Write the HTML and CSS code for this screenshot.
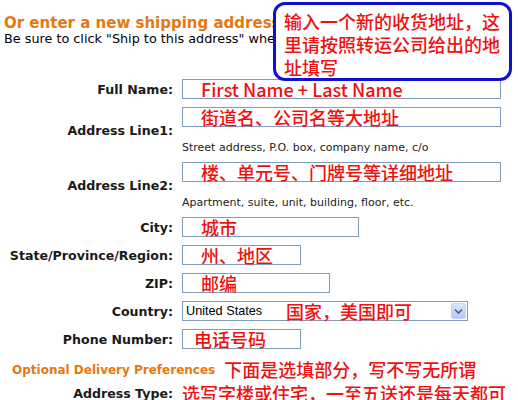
FILE: index.html
```html
<!DOCTYPE html>
<html lang="zh-CN">
<head>
    <meta charset="UTF-8">
    <title>Shipping Address</title>
    <link rel="stylesheet" href="styles.css">
</head>
<body>

<div class="page">

    <!-- Heading -->
    <h1 class="title">Or enter a new shipping address</h1>
    <p class="note">Be sure to click "Ship to this address" when you're done.</p>

    <!-- Annotation bubble -->
    <div class="callout">输入一个新的收货地址，这里请按照转运公司给出的地址填写</div>

    <!-- Address form -->
    <div class="form">
        <div class="label">Full Name:</div>
        <div class="field">
            <div class="input w-full"><span class="tip">First Name + Last Name</span></div>
        </div>

        <div class="label">Address Line1:</div>
        <div class="field">
            <div class="input w-full"><span class="tip">街道名、公司名等大地址</span></div>
            <div class="hint">Street address, P.O. box, company name, c/o</div>
        </div>

        <div class="label">Address Line2:</div>
        <div class="field">
            <div class="input w-full"><span class="tip">楼、单元号、门牌号等详细地址</span></div>
            <div class="hint">Apartment, suite, unit, building, floor, etc.</div>
        </div>

        <div class="label">City:</div>
        <div class="field">
            <div class="input w-city"><span class="tip">城市</span></div>
        </div>

        <div class="label">State/Province/Region:</div>
        <div class="field">
            <div class="input w-short"><span class="tip">州、地区</span></div>
        </div>

        <div class="label">ZIP:</div>
        <div class="field">
            <div class="input w-zip"><span class="tip">邮编</span></div>
        </div>

        <div class="label">Country:</div>
        <div class="field">
            <div class="select">
                <span class="option">United States</span>
                <span class="tip tip-select">国家，美国即可</span>
                <span class="arrow">
                    <svg width="9" height="7" viewBox="0 0 9 7"><path d="M1 1.5 L4.5 5 L8 1.5" fill="none" stroke="#4d6185" stroke-width="1.6"/></svg>
                </span>
            </div>
        </div>

        <div class="label">Phone Number:</div>
        <div class="field">
            <div class="input w-short"><span class="tip tip-phone">电话号码</span></div>
        </div>
    </div>

    <div class="optional">
        <span class="opt-title">Optional Delivery Preferences</span>
        <span class="tip">下面是选填部分，写不写无所谓</span>
    </div>

    <div class="form">
        <div class="label">Address Type:</div>
        <div class="field">
            <span class="tip tip-plain">选写字楼或住宅，一至五送还是每天都可</span>
        </div>
    </div>

</div>

</body>
</html>
```

FILE: styles.css
```css
/* Base */
* {
    margin: 0;
    padding: 0;
    box-sizing: border-box;
}

body {
    background: #ffffff;
    font-family: "DejaVu Sans", Verdana, sans-serif;
    color: #000;
    overflow: hidden;
}

.page {
    position: relative;
    width: 518px;
    height: 400px;
    padding: 14px 4px 0;
    overflow: hidden;
}

/* Heading */
.title {
    font-size: 15px;
    line-height: 18px;
    font-weight: bold;
    color: #e47911;
    white-space: nowrap;
}

.note {
    font-size: 12.8px;
    line-height: 14px;
    white-space: nowrap;
}

/* Callout */
.callout {
    position: absolute;
    left: 273px;
    top: 2px;
    width: 239px;
    height: 79px;
    background: #fff;
    border: 3px solid #1010d0;
    border-radius: 12px;
    padding: 5px 6px 0 8px;
    font-family: "Noto Sans CJK SC", sans-serif;
    font-weight: 500;
    font-size: 18px;
    line-height: 23px;
    color: #f01010;
}

/* Form */
.form {
    display: grid;
    grid-template-columns: 169px 1fr;
    column-gap: 9px;
    row-gap: 8px;
    margin-top: 33px;
}

.label {
    font-size: 12.6px;
    font-weight: bold;
    color: #1a1a1a;
    text-align: right;
    align-self: center;
    white-space: nowrap;
}

.field {
    display: flex;
    flex-direction: column;
}

.input {
    height: 20px;
    border: 1px solid #7f9db9;
    padding-left: 18px;
    display: flex;
    align-items: center;
}

.w-full { width: 319px; }
.w-city { width: 177px; }
.w-short { width: 119px; }
.w-zip { width: 148px; }

.hint {
    font-size: 11px;
    line-height: 12px;
    padding-top: 15px;
    color: #222;
    white-space: nowrap;
}

.tip {
    font-family: "Noto Sans CJK SC", sans-serif;
    font-weight: 500;
    font-size: 18px;
    line-height: 19px;
    color: #f01010;
    white-space: nowrap;
}

.tip-phone {
    margin-left: -7px;
}

/* Select */
.select {
    width: 286px;
    height: 20px;
    border: 1px solid #7f9db9;
    display: flex;
    align-items: center;
    padding-left: 3px;
}

.option {
    font-family: "Liberation Sans", Arial, sans-serif;
    font-size: 12.7px;
    width: 100px;
}

.tip-select {
    flex: 1;
}

.arrow {
    width: 15px;
    height: 16px;
    margin-right: 1px;
    background: linear-gradient(#dbe6fb, #b7c9f2);
    border: 1px solid #c3d3fd;
    border-radius: 2px;
    display: flex;
    align-items: center;
    justify-content: center;
}

/* Optional section */
.optional {
    margin: 11px 0 0 8px;
    display: flex;
    align-items: center;
    gap: 9px;
}

.opt-title {
    font-size: 12px;
    font-weight: bold;
    color: #e47911;
    white-space: nowrap;
}

.optional + .form {
    margin-top: 3px;
}

.tip-plain {
    line-height: 22px;
}
```
